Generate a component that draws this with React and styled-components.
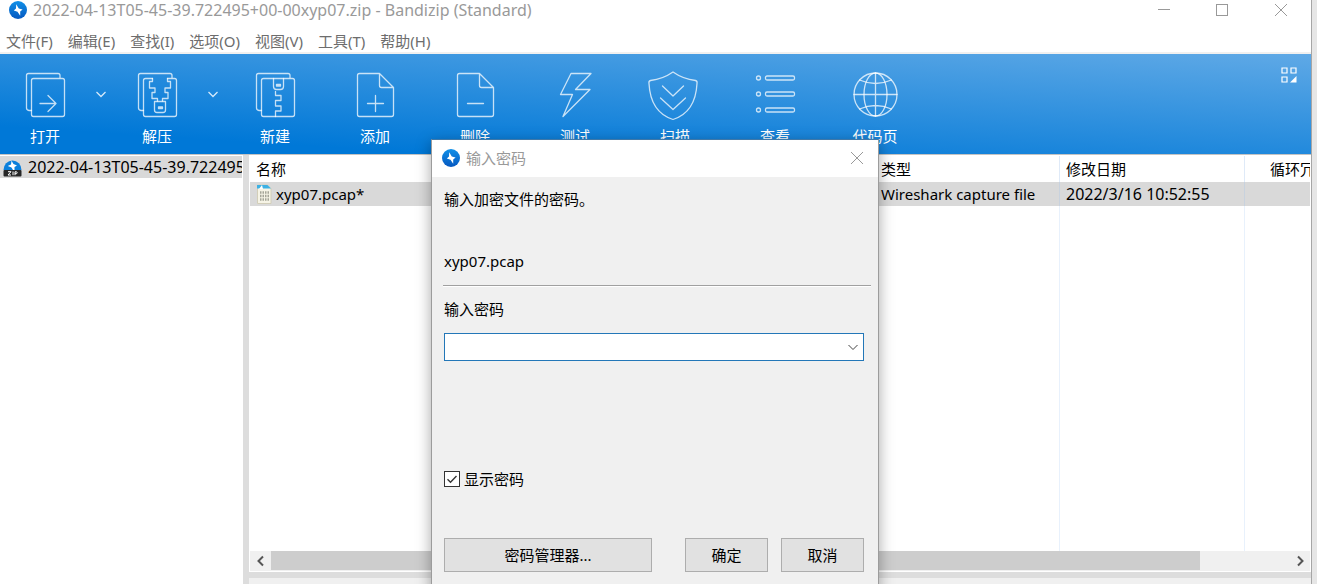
import React from 'react';
import styled, { createGlobalStyle } from 'styled-components';

const Global = createGlobalStyle`
  * { box-sizing: border-box; }
  body {
    margin: 0;
    background: #e6e6e6;
    color: #000;
    font: 15px/20px "Noto Sans", "Noto Sans CJK SC", sans-serif;
  }
  button, input { font: inherit; color: inherit; }
`;

const Shell = styled.div`
  position: relative;
  display: flex;
  flex-direction: column;
  height: 100vh;
  margin-right: 5px;
  overflow: hidden;
  background: #fff;
  border-right: 1px solid #a6a6a6;
`;

const TitleBar = styled.header`
  display: flex;
  align-items: center;
  height: 20px;
  padding-left: 9px;
  gap: 6px;
  color: #999;
`;

const Title = styled.h1`
  flex: 1;
  margin: 0;
  font-size: 16px;
  font-weight: 400;
  line-height: 20px;
  white-space: nowrap;
`;

const IconButton = styled.button`
  display: flex;
  align-items: center;
  justify-content: center;
  width: ${(p) => p.$w || 20}px;
  height: ${(p) => p.$h || 20}px;
  padding: 0;
  border: 0;
  background: none;
  color: ${(p) => p.$color || 'inherit'};
`;

const MenuBar = styled.nav`
  display: flex;
  gap: 15px;
  height: 34px;
  padding: 11px 6px 0;
  border-bottom: 2px solid #f0f0f0;
  color: #6d6d6d;
`;

const MenuItem = styled.button`
  height: 20px;
  padding: 0;
  border: 0;
  background: none;
  line-height: 20px;
  white-space: nowrap;
`;

const Toolbar = styled.div`
  display: flex;
  flex: none;
  height: 101px;
  padding-left: 1px;
  border-bottom: 1px solid #c3c3c3;
  background: linear-gradient(3.6deg, #0078d7 15%, #5fa9e6 100%);
  color: #fff;
`;

const Tool = styled.button`
  display: flex;
  flex-direction: column;
  align-items: center;
  width: ${(p) => (p.$narrow ? 88 : 100)}px;
  padding: 16px 0 0;
  border: 0;
  background: none;
  color: #fff;
  gap: 8px;
  line-height: 20px;
`;

const ToolIcon = styled.svg`
  width: 48px;
  height: 48px;
  overflow: visible;
  fill: none;
  stroke: #fff;
  stroke-opacity: 0.75;
  stroke-width: 1.3;
  stroke-linejoin: round;
  stroke-linecap: round;
`;

const ToolbarEnd = styled.div`
  margin-left: auto;
  padding: 11px 12px 0 0;
`;

const Workspace = styled.div`
  display: flex;
  flex: 1;
  min-height: 0;
  background: #ddd;
`;

const TreePane = styled.aside`
  width: 243px;
  padding: 1px 1px 0 0;
  background: #fff;
`;

const TreeRow = styled.div`
  display: flex;
  align-items: center;
  gap: 6px;
  height: 22px;
  padding-left: 3px;
  overflow: hidden;
  background: #d9d9d9;
  font-size: 16px;
  white-space: nowrap;
`;

const TreeIcon = styled.svg`
  flex: none;
`;

const Main = styled.main`
  display: flex;
  flex: 1;
  flex-direction: column;
  gap: 6px;
  min-width: 0;
  margin-left: 6px;
`;

const ListPane = styled.section`
  display: flex;
  flex: 1;
  flex-direction: column;
  min-height: 0;
  padding: 1px;
  background: #fff;
`;

const ListScroll = styled.div`
  flex: 1;
  min-height: 0;
  overflow: hidden;
`;

const Table = styled.table`
  width: 100%;
  height: 100%;
  border-collapse: separate;
  border-spacing: 0;
  table-layout: fixed;
`;

const Th = styled.th`
  height: 26px;
  padding: 0 6px;
  overflow: hidden;
  border-right: ${(p) => (p.$last ? 0 : '1px solid #dfeaf8')};
  font-weight: 400;
  text-align: left;
  white-space: nowrap;
`;

const Td = styled.td`
  height: ${(p) => (p.$filler ? 'auto' : '24px')};
  padding: 0 6px;
  border-right: ${(p) => (p.$last ? 0 : p.$filler ? '1px solid #e8f1fc' : '1px solid #c8d2de')};
  background: ${(p) => (p.$filler ? '#fff' : '#d9d9d9')};
  font-size: ${(p) => (p.$numeric ? 16 : 15)}px;
  white-space: nowrap;
`;

const CrcLabel = styled.span`
  display: block;
  padding-left: 19px;
`;

const FileCell = styled.div`
  display: flex;
  align-items: center;
  gap: 4px;
`;

const ScrollBar = styled.div`
  display: flex;
  height: 20px;
  background: #f0f0f0;
`;

const Track = styled.div`
  flex: 1;
`;

const Thumb = styled.div`
  width: calc(100% * 21 / 23);
  height: 19px;
  background: #cdcdcd;
`;

const InfoPane = styled.section`
  height: 6px;
  padding: 1px 5px 0;
  overflow: hidden;
  background: #f0f0f0;
  color: #999;
`;

const DialogLayer = styled.div`
  position: absolute;
  inset: 0 1px 0 0;
  display: flex;
  align-items: flex-start;
  justify-content: center;
  padding-top: 139px;
  pointer-events: none;
`;

const Dialog = styled.form`
  display: flex;
  flex: none;
  flex-direction: column;
  width: 448px;
  border: 1px solid #9c9c9c;
  border-top-color: #3f78a8;
  background: #f0f0f0;
  box-shadow: 0 4px 14px rgba(0, 0, 0, 0.35);
  pointer-events: auto;
`;

const DialogHead = styled.header`
  display: flex;
  align-items: center;
  gap: 6px;
  height: 37px;
  padding: 0 11px 2px 10px;
  background: #fff;
  color: #999;
`;

const DialogTitle = styled.h2`
  flex: 1;
  margin: 0;
  font-size: 15px;
  font-weight: 400;
  line-height: 20px;
`;

const DialogBody = styled.div`
  display: flex;
  flex-direction: column;
  padding: 12px 14px 20px 12px;
`;

const Message = styled.p`
  margin: 0 0 42px;
`;

const FileName = styled.p`
  margin: 0 0 14px;
`;

const Rule = styled.hr`
  align-self: stretch;
  height: 2px;
  margin: 0 -7px 12px -1px;
  border: 0;
  border-top: 1px solid #a0a0a0;
  background: #fff;
`;

const Label = styled.label`
  margin-bottom: 14px;
`;

const Combo = styled.div`
  display: flex;
  height: 28px;
  margin-bottom: 108px;
  border: 1px solid #2377b8;
  background: #fff;
`;

const PasswordInput = styled.input`
  flex: 1;
  min-width: 0;
  padding: 0 6px;
  border: 0;
  outline: 0;
  background: none;
`;

const CheckRow = styled.label`
  display: flex;
  align-items: center;
  gap: 4px;
  margin-bottom: 49px;
`;

const CheckBox = styled.input`
  appearance: none;
  width: 16px;
  height: 16px;
  margin: 0;
  border: 1px solid #333;
  background: #fff;
  &:checked {
    background: #fff url("data:image/svg+xml,%3Csvg xmlns='http://www.w3.org/2000/svg' viewBox='0 0 14 14'%3E%3Cpath d='M2.5 7.2l3 3 6-6.2' fill='none' stroke='%23333' stroke-width='1.4'/%3E%3C/svg%3E");
  }
`;

const Buttons = styled.div`
  display: flex;
  gap: 13px;
`;

const PushButton = styled.button`
  width: ${(p) => (p.$wide ? 208 : 83)}px;
  height: 34px;
  margin-right: ${(p) => (p.$wide ? 'auto' : 0)};
  padding: 0;
  border: 1px solid #adadad;
  background: #e1e1e1;
`;

const Logo = ({ id }) => (
  <svg width="18" height="18" viewBox="0 0 18 18" aria-hidden="true">
    <defs>
      <linearGradient id={id} x1="0" y1="0" x2="0" y2="1">
        <stop offset="0" stopColor="#1090e8" />
        <stop offset="1" stopColor="#0658c0" />
      </linearGradient>
    </defs>
    <circle cx="9" cy="9" r="9" fill={`url(#${id})`} />
    <path d="M7.2 3.2L9.8 7.4 13.6 8.6 11.2 10.400 11.2 14.800 8.500 10.800 4.800 9.400 7 7.600z" fill="#fff" />
  </svg>
);

const ZipIcon = () => (
  <TreeIcon width="19" height="19" viewBox="0 0 19 19" aria-hidden="true">
    <path d="M0.5 12a9 9.5 0 1 1 18 0z" fill="#0b80dc" />
    <path d="M8.5 2.8L10.5 6 14 7.500 11.500 9v3H10L8.500 9.500 4.800 8 8 6.500z" fill="#fff" />
    <rect x="0.5" y="12" width="18" height="6.5" rx="1" fill="#262626" />
    <path d="M5 13.7h3l-3 3.3h3M10 13.5v3.7M12 17.2v-3.4h1.6q1.2 1 0 1.9H12" fill="none" stroke="#fff" />
  </TreeIcon>
);

const FileIcon = () => (
  <svg width="16" height="20" viewBox="0 0 16 20" aria-hidden="true">
    <path d="M1.5 1h10L15 4.500v15H1.500z" fill="#f6f4e6" stroke="#d2ceb9" />
    <path d="M1 1h10.5l3.5 3.5H1z" fill="#3db1e4" />
    <path d="M3 5l3-4 1 4z" fill="#fff" />
    <path d="M4 8.5h9M4 12h9M4 15.5h9" stroke="#a5a598" strokeWidth="2.5" strokeDasharray="1.5 1" />
  </svg>
);

const Chevron = ({ dir = 'down', size = 12, width = 1 }) => {
  const d = { down: 'M1.5 4l4.5 4.5L10.5 4', left: 'M8 1.5L3.5 6 8 10.5', right: 'M4 1.5L8.5 6 4 10.5' }[dir];
  return (
    <svg width={size} height={size} viewBox="0 0 12 12" fill="none" stroke="currentColor" strokeWidth={width} aria-hidden="true">
      <path d={d} />
    </svg>
  );
};

const Cross = () => (
  <svg width="14" height="14" viewBox="0 0 14 14" stroke="currentColor" aria-hidden="true">
    <path d="M1 1l12 12M13 1L1 13" />
  </svg>
);

const pages = <path d="M10.5 40.5H8q-2.5-.5-2.5-2.5V5.5q0-2 2-2H37q2 0 2 2v2" />;

const filePage = <path d="M28.5 3.5H8.5q-2 0-2 2v39q0 2 2 2h32q2 0 2-2V17.5zM28.5 3.5v12q0 2 2 2h12" />;

const art = {
  open: (
    <>
      {pages}
      <rect x="10.5" y="8.5" width="33" height="38" rx="2" />
      <path d="M19 33.5h16M27 25.5l8 8-8 8" />
    </>
  ),
  extract: (
    <>
      {pages}
      <path d="M19.5 8.5h-7q-2 0-2 2v34q0 2 2 2h29q2 0 2-2v-34q0-2-2-2h-7" />
      <path d="M19.5 8.5v3h-3v6.5h5.5v4.5h-3v6h5.5v2.5M34.5 8.5v3h3v6.5h-5.5v4.5h3v6h-5.5v2.5" />
      <path d="M21.5 31.5h11v8.5q0 2.5-2.5 2.5h-6q-2.5 0-2.5-2.5z" />
      <rect x="25.5" y="37" width="4" height="1.5" />
    </>
  ),
  create: (
    <>
      {pages}
      <rect x="10.5" y="8.5" width="33" height="38" rx="2" />
      <path d="M22.5 8.5v8q0 3 3 3h4q3 0 3-3v-8" />
      <rect x="25.5" y="14.5" width="4" height="1.5" />
      <path d="M24.5 21.5v4h5.5v5h-5.5v5.5h5.5v5h-5.5v5.5" />
    </>
  ),
  add: (
    <>
      {filePage}
      <path d="M16.5 33.5h16M24.5 25.5v16" />
    </>
  ),
  remove: (
    <>
      {filePage}
      <path d="M16.5 33.5h16" />
    </>
  ),
  test: <path d="M20 3.5h20L24.5 19.5h14.5L12 46.5l9.5-22H9.5z" />,
  scan: (
    <>
      <path d="M22 2Q32 9 44.5 10.5q2 .5 1.5 3C45 33 36 45 22 49.5 8 45-1 33-2 13.5q-.5-2.5 1.5-3Q12 9 22 2z" />
      <path d="M11.5 16L22 26l10.5-10M9.5 28L22 39.5 34.5 28" />
    </>
  ),
  view: (
    <>
      {[8, 24, 40].map((y) => (
        <g key={y}>
          <circle cx="7.5" cy={y} r="2" />
          <rect x="14.5" y={y - 2} width="29" height="4" rx="1.5" />
        </g>
      ))}
    </>
  ),
  codepage: (
    <>
      <circle cx="24.5" cy="24.5" r="21.5" />
      <ellipse cx="24.5" cy="24.5" rx="11.5" ry="21.5" />
      <path d="M24.5 3v43M3 24.5h43M8.5 10q16 7 32 0M8.5 39q16-7 32 0" />
    </>
  ),
};

const tools = [
  { key: 'open', label: '打开', more: true },
  { key: 'extract', label: '解压', more: true },
  { key: 'create', label: '新建' },
  { key: 'add', label: '添加' },
  { key: 'remove', label: '删除' },
  { key: 'test', label: '测试' },
  { key: 'scan', label: '扫描' },
  { key: 'view', label: '查看' },
  { key: 'codepage', label: '代码页' },
];

const menus = ['文件(F)', '编辑(E)', '查找(I)', '选项(O)', '视图(V)', '工具(T)', '帮助(H)'];

export default function App() {
  return (
    <>
      <Global />
      <Shell>
        <TitleBar>
          <Logo id="logo-window" />
          <Title>2022-04-13T05-45-39.722495+00-00xyp07.zip - Bandizip (Standard)</Title>
          <IconButton $w={58} aria-label="Minimize">
            <svg width="14" height="14" viewBox="0 0 14 14" stroke="currentColor"><path d="M1 6.5h12" /></svg>
          </IconButton>
          <IconButton $w={46} aria-label="Maximize">
            <svg width="14" height="14" viewBox="0 0 14 14" fill="none" stroke="currentColor"><rect x="1.5" y="1.5" width="11" height="11" /></svg>
          </IconButton>
          <IconButton $w={60} aria-label="Close"><Cross /></IconButton>
        </TitleBar>
        <MenuBar>
          {menus.map((m) => <MenuItem key={m}>{m}</MenuItem>)}
        </MenuBar>
        <Toolbar>
          {tools.map((t) => (
            <React.Fragment key={t.key}>
              <Tool $narrow={t.more}>
                <ToolIcon viewBox="0 0 48 48" aria-hidden="true">{art[t.key]}</ToolIcon>
                {t.label}
              </Tool>
              {t.more && (
                <IconButton $w={24} $h={80} $color="#d5e9fa" aria-label={`${t.label}菜单`}><Chevron width={1.3} /></IconButton>
              )}
            </React.Fragment>
          ))}
          <ToolbarEnd>
            <IconButton aria-label="布局">
              <svg width="16" height="16" viewBox="0 0 16 16" fill="none" stroke="#fff" strokeWidth="1.2">
                <path d="M1 1h5v5H1zM10 1h5v5h-5zM1 10h5v5H1z" />
                <path d="M15.5 9v6.500H9z" fill="#fff" stroke="none" />
              </svg>
            </IconButton>
          </ToolbarEnd>
        </Toolbar>
        <Workspace>
          <TreePane>
            <TreeRow><ZipIcon />2022-04-13T05-45-39.722495</TreeRow>
          </TreePane>
          <Main>
            <ListPane>
              <ListScroll>
                <Table>
                  <colgroup>
                    <col />
                    <col width="185" />
                    <col width="185" />
                    <col width="65" />
                  </colgroup>
                  <thead>
                    <tr>
                      <Th>名称</Th>
                      <Th>类型</Th>
                      <Th>修改日期</Th>
                      <Th $last><CrcLabel>循环冗</CrcLabel></Th>
                    </tr>
                  </thead>
                  <tbody>
                    <tr>
                      <Td><FileCell><FileIcon />xyp07.pcap*</FileCell></Td>
                      <Td>Wireshark capture file</Td>
                      <Td $numeric>2022/3/16 10:52:55</Td>
                      <Td $last />
                    </tr>
                    <tr>
                      <Td $filler />
                      <Td $filler />
                      <Td $filler />
                      <Td $filler $last />
                    </tr>
                  </tbody>
                </Table>
              </ListScroll>
              <ScrollBar>
                <IconButton $w={21} $color="#555" aria-label="向左滚动"><Chevron dir="left" width={2} /></IconButton>
                <Track><Thumb /></Track>
                <IconButton $w={21} $color="#555" aria-label="向右滚动"><Chevron dir="right" width={2} /></IconButton>
              </ScrollBar>
            </ListPane>
            <InfoPane>
              <Chevron />
            </InfoPane>
          </Main>
        </Workspace>
        <DialogLayer>
          <Dialog onSubmit={(e) => e.preventDefault()}>
            <DialogHead>
              <Logo id="logo-dialog" />
              <DialogTitle>输入密码</DialogTitle>
              <IconButton type="button" aria-label="Close"><Cross /></IconButton>
            </DialogHead>
            <DialogBody>
              <Message>输入加密文件的密码。</Message>
              <FileName>xyp07.pcap</FileName>
              <Rule />
              <Label htmlFor="password">输入密码</Label>
              <Combo>
                <PasswordInput id="password" type="text" />
                <IconButton type="button" $h={26} $color="#444" aria-label="历史密码"><Chevron /></IconButton>
              </Combo>
              <CheckRow><CheckBox type="checkbox" defaultChecked />显示密码</CheckRow>
              <Buttons>
                <PushButton type="button" $wide>密码管理器...</PushButton>
                <PushButton type="submit">确定</PushButton>
                <PushButton type="button">取消</PushButton>
              </Buttons>
            </DialogBody>
          </Dialog>
        </DialogLayer>
      </Shell>
    </>
  );
}
